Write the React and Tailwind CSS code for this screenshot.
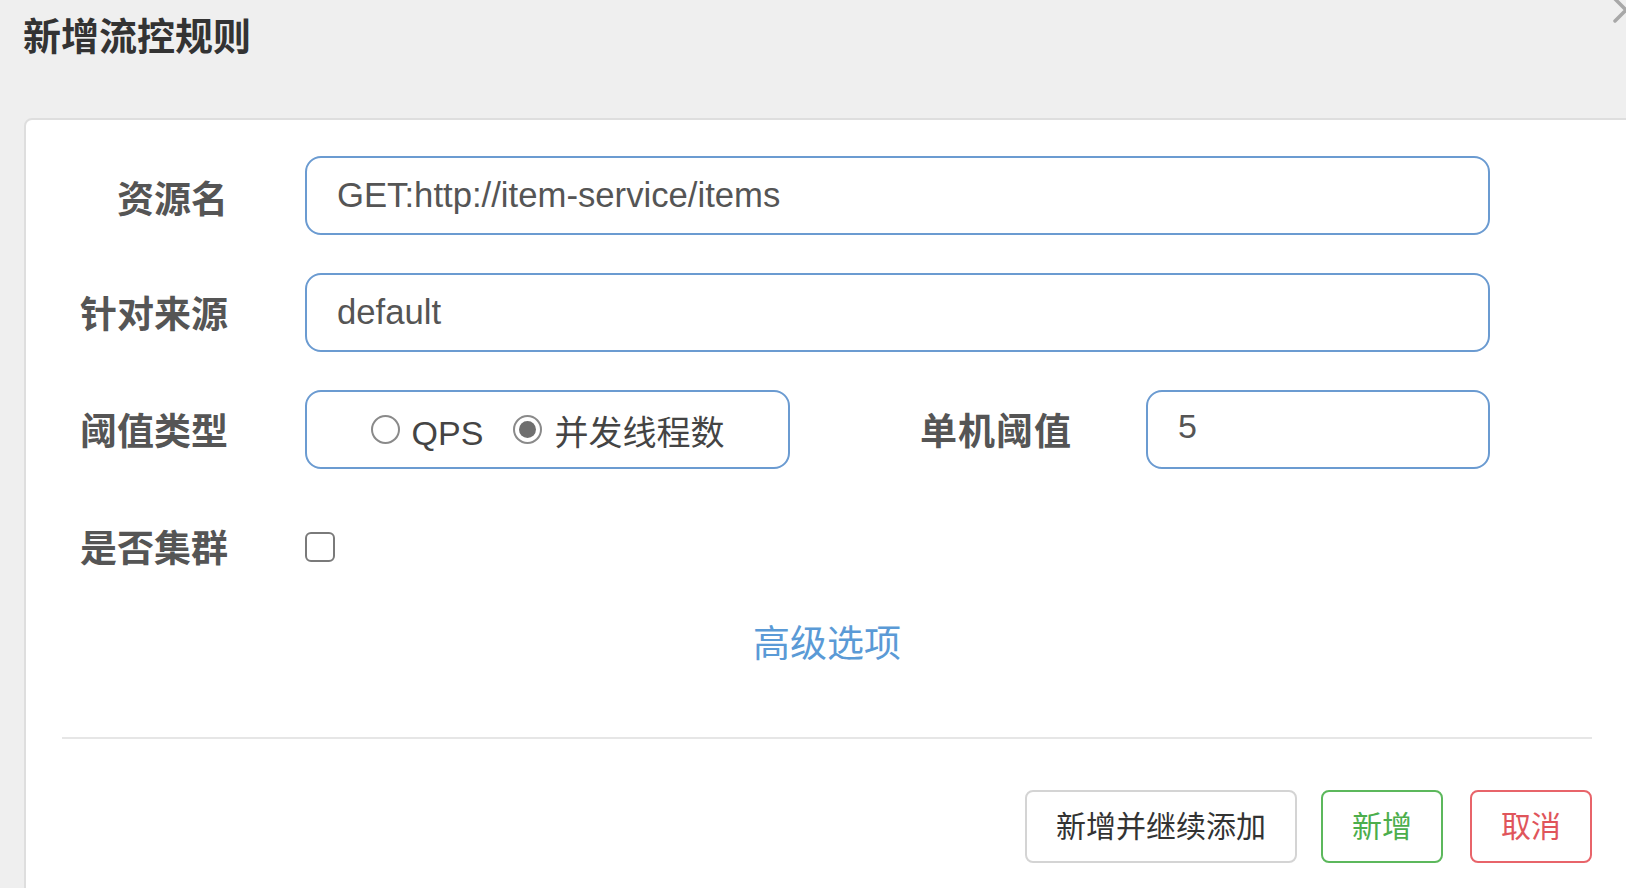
import { useState } from 'react';

// 流控规则新增弹窗
const Label = ({ children, className = '' }) => (
  <div className={`shrink-0 text-right text-[37px] font-bold leading-none text-[#555] ${className}`}>
    {children}
  </div>
);

const Radio = ({ checked, label, onClick }) => (
  <button type="button" onClick={onClick} className="flex items-center gap-[12px]">
    <span className="flex h-[29px] w-[29px] items-center justify-center rounded-full border-2 border-[#8a8a8a] bg-white">
      {checked && <span className="h-[17px] w-[17px] rounded-full bg-[#6f6f6f]" />}
    </span>
    <span className="mt-[6px] text-[34px] leading-none text-[#444]">{label}</span>
  </button>
);

const App = () => {
  const [grade, setGrade] = useState('thread');
  const [cluster, setCluster] = useState(false);

  return (
    <div className="relative h-[888px] w-full overflow-hidden bg-[#efefef] font-['Liberation_Sans','Noto_Sans_CJK_SC',sans-serif]">
      {/* 关闭按钮，右上角只露出一半 */}
      <svg className="absolute right-[-14px] top-[-4px]" width="28" height="28" viewBox="0 0 28 28">
        <path d="M3 3 L25 25 M25 3 L3 25" stroke="#a8a8a8" strokeWidth="3.5" strokeLinecap="round" fill="none" />
      </svg>

      <div className="h-[118px] pl-[23px] pt-[18px]">
        <h3 className="text-[38px] font-bold leading-[38px] text-[#333]">新增流控规则</h3>
      </div>

      <div className="ml-[24px] h-[800px] w-[1606px] rounded-tl-[8px] border-2 border-[#dedede] bg-white">
        <div className="flex flex-col gap-[38px] pt-[36px]">
          <div className="flex h-[79px] items-center">
            <Label className="w-[202px] pt-[10px]">资源名</Label>
            <input
              defaultValue="GET:http://item-service/items"
              className="ml-[77px] h-[79px] w-[1185px] rounded-[16px] border-2 border-[#6b9bd1] pl-[30px] text-[34.7px] text-[#555] outline-none"
            />
          </div>

          <div className="flex h-[79px] items-center">
            <Label className="w-[202px] pt-[6px]">针对来源</Label>
            <input
              defaultValue="default"
              className="ml-[77px] h-[79px] w-[1185px] rounded-[16px] border-2 border-[#6b9bd1] pl-[30px] text-[34.7px] text-[#555] outline-none"
            />
          </div>

          <div className="flex h-[79px] items-center">
            <Label className="w-[202px] pt-[6px]">阈值类型</Label>
            <div className="ml-[77px] flex h-[79px] w-[485px] items-center justify-center gap-[30px] rounded-[16px] border-2 border-[#6b9bd1]">
              <Radio checked={grade === 'qps'} label="QPS" onClick={() => setGrade('qps')} />
              <Radio checked={grade === 'thread'} label="并发线程数" onClick={() => setGrade('thread')} />
            </div>
            <Label className="ml-[121px] w-[161px] pt-[6px] tracking-[1px]">单机阈值</Label>
            <input
              defaultValue="5"
              className="ml-[74px] h-[79px] w-[344px] rounded-[16px] border-2 border-[#6b9bd1] pb-[6px] pl-[30px] text-[34px] text-[#555] outline-none"
            />
          </div>

          <div className="flex h-[79px] items-center">
            <Label className="w-[202px] pt-[6px]">是否集群</Label>
            <button
              type="button"
              onClick={() => setCluster(!cluster)}
              className="ml-[77px] flex h-[30px] w-[30px] items-center justify-center rounded-[6px] border-2 border-[#7a7a7a] bg-white text-[20px] leading-none text-[#555]"
            >
              {cluster ? '✓' : ''}
            </button>
          </div>
        </div>

        <div className="mx-[36px] flex h-[153px] items-start justify-center border-b-2 border-[#e6e6e6] pt-[40px]">
          <a className="cursor-pointer text-[37px] leading-none text-[#5a9ad6]">高级选项</a>
        </div>

        <div className="mr-[36px] flex justify-end pt-[51px]">
          <button className="h-[73px] rounded-[8px] border-2 border-[#d4d4d4] px-[29px] text-[30px] text-[#333]">
            新增并继续添加
          </button>
          <button className="ml-[24px] h-[73px] rounded-[8px] border-2 border-[#5cb85c] px-[29px] text-[30px] text-[#4cae4c]">
            新增
          </button>
          <button className="ml-[27px] h-[73px] rounded-[8px] border-2 border-[#e8646a] px-[29px] text-[30px] text-[#e0555b]">
            取消
          </button>
        </div>
      </div>
    </div>
  );
};

export default App;
